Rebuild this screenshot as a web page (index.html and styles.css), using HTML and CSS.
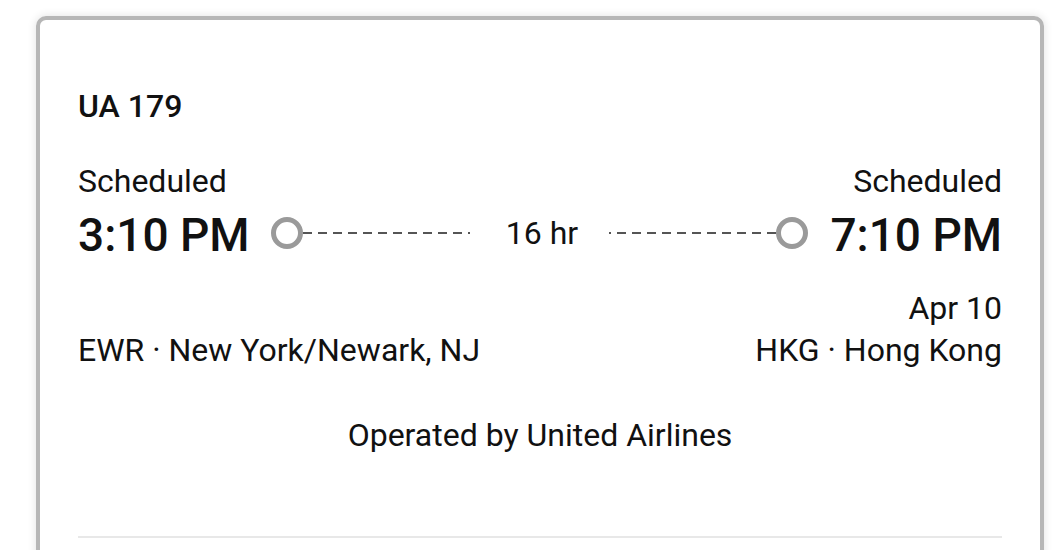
FILE: index.html
```html
<!DOCTYPE html>
<html lang="en">
<head>
<meta charset="utf-8">
<title>UA 179</title>
<link rel="stylesheet" href="styles.css">
</head>
<body>
<div class="card">
  <div class="flight-no">UA 179</div>
  <div class="times">
    <div class="side">
      <div class="status">Scheduled</div>
      <div class="time">3:10 PM</div>
    </div>
    <div class="track">
      <span class="dot"></span>
      <span class="dash"></span>
      <span class="duration">16 hr</span>
      <span class="dash dash-right"></span>
      <span class="dot"></span>
    </div>
    <div class="side side-right">
      <div class="status">Scheduled</div>
      <div class="time">7:10 PM</div>
    </div>
  </div>
  <div class="places">
    <div class="place">
      <div class="date">&nbsp;</div>
      <div class="airport">EWR · New York/Newark, NJ</div>
    </div>
    <div class="place place-right">
      <div class="date">Apr 10</div>
      <div class="airport">HKG · Hong Kong</div>
    </div>
  </div>
  <div class="operator">Operated by United Airlines</div>
  <div class="divider"></div>
</div>
</body>
</html>
```
FILE: styles.css
```css
html, body {
  margin: 0;
  padding: 0;
  background: #ffffff;
  overflow: hidden;
}
body {
  font-family: Roboto, "Noto Sans", sans-serif;
  color: #111111;
  height: 550px;
}
.card {
  margin: 16px 18px 0 36px;
  border: 4px solid #b6b6b6;
  border-radius: 10px;
  box-shadow: 0 0 10px rgba(0, 0, 0, 0.12);
  padding: 67px 38px 0 38px;
  height: 600px;
  box-sizing: border-box;
}
.flight-no {
  font-size: 32px;
  line-height: 38px;
  font-weight: 500;
}
.times {
  display: flex;
  align-items: flex-end;
  margin-top: 37px;
}
.status {
  font-size: 32px;
  line-height: 38px;
}
.time {
  font-size: 46px;
  line-height: 54px;
  font-weight: 500;
  margin-top: 8px;
}
.side-right {
  text-align: right;
}
.track {
  flex: 1;
  display: flex;
  align-items: center;
  height: 54px;
  padding: 0 22px 5px 21px;
  box-sizing: border-box;
}
.dot {
  width: 32px;
  height: 32px;
  border: 5px solid #9a9a9a;
  border-radius: 50%;
  box-sizing: border-box;
  flex: none;
}
.dash {
  flex: 1;
  height: 2px;
  background: repeating-linear-gradient(to right, #555555 0 9px, transparent 9px 15px);
}
.dash-right {
  background: repeating-linear-gradient(to left, #555555 0 9px, transparent 9px 15px);
}
.duration {
  font-size: 32px;
  line-height: 38px;
  padding: 0 31px 0 36px;
}
.places {
  display: flex;
  justify-content: space-between;
  margin-top: 25px;
}
.place {
  font-size: 32px;
  line-height: 42px;
}
.place-right {
  text-align: right;
}
.operator {
  font-size: 32px;
  line-height: 42px;
  text-align: center;
  margin-top: 43px;
}
.divider {
  height: 2px;
  background: #e8e8e8;
  margin-top: 80px;
}
```
